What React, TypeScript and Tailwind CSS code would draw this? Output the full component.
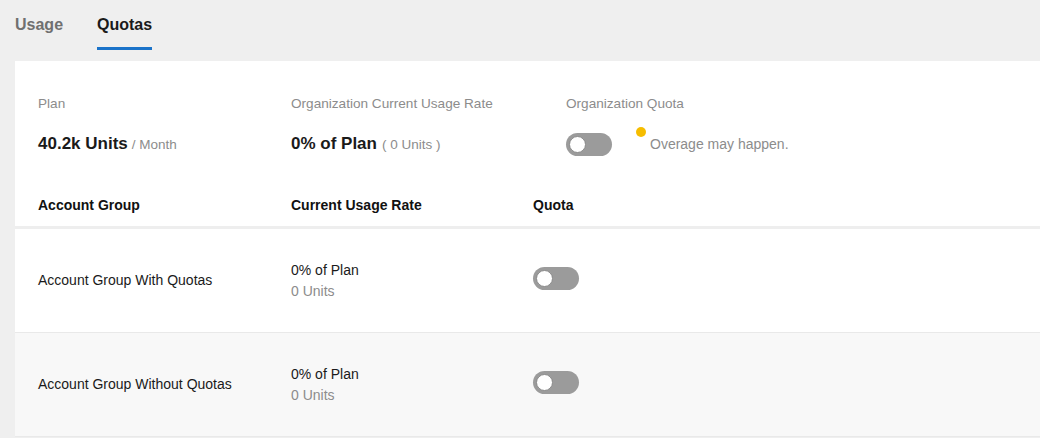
import React from 'react'

const font = { fontFamily: '"Liberation Sans", Arial, sans-serif' }

function Toggle() {
  return (
    <div className="relative h-[23px] w-[46px] shrink-0 rounded-full bg-[#9b9b9b]">
      <span className="absolute left-[3px] top-[3px] h-[17px] w-[17px] rounded-full border border-[#8a8a8a] bg-white" />
    </div>
  )
}

export default function App() {
  const rows = [
    { name: 'Account Group With Quotas', bg: 'bg-white' },
    { name: 'Account Group Without Quotas', bg: 'bg-[#f8f8f8]' },
  ]

  return (
    <div className="h-[438px] w-[1040px] overflow-hidden bg-[#efefef]" style={font}>
      <div className="flex h-[61px] gap-[34px] px-[15px]">
        <button className="h-[50px] border-b-[3px] border-transparent pt-[14px] pb-[11px] text-[16px] font-bold leading-[22px] text-[#707070]">
          Usage
        </button>
        <button className="h-[50px] border-b-[3px] border-[#1b73c9] pt-[14px] pb-[11px] text-[16px] font-bold leading-[22px] text-[#1a1a1a]">
          Quotas
        </button>
      </div>

      <div className="ml-[15px] bg-white">
        <div className="grid grid-cols-[253px_275px_1fr] px-[23px] pt-[35px]">
          <div>
            <div className="text-[13.6px] leading-[16px] text-[#8c8c8c]">Plan</div>
            <div className="mt-[20px] flex h-[24px] items-center">
              <span className="text-[17px] font-bold text-[#1a1a1a]">40.2k Units</span>
              <span className="ml-[4px] mt-[2px] text-[13.5px] text-[#8c8c8c]">/ Month</span>
            </div>
          </div>
          <div>
            <div className="text-[13.6px] leading-[16px] text-[#8c8c8c]">Organization Current Usage Rate</div>
            <div className="mt-[20px] flex h-[24px] items-center">
              <span className="text-[17px] font-bold text-[#1a1a1a]">0% of Plan</span>
              <span className="ml-[5px] mt-[2px] text-[13.5px] text-[#8c8c8c]">( 0 Units )</span>
            </div>
          </div>
          <div>
            <div className="text-[13.6px] leading-[16px] text-[#8c8c8c]">Organization Quota</div>
            <div className="mt-[20px] flex h-[24px] items-center">
              <Toggle />
              <span className="ml-[24px] -mt-[25px] h-[10px] w-[10px] shrink-0 rounded-full bg-[#f6bd00]" />
              <span className="ml-[4px] text-[14px] text-[#8c8c8c]">Overage may happen.</span>
            </div>
          </div>
        </div>

        <div className="grid grid-cols-[253px_242px_1fr] border-b-[3px] border-[#eeeeee] px-[23px] pt-[39px] pb-[11px] text-[14px] font-bold leading-[20px] text-[#111]">
          <div>Account Group</div>
          <div>Current Usage Rate</div>
          <div>Quota</div>
        </div>

        {rows.map((row) => (
          <div
            key={row.name}
            className={`grid h-[104px] grid-cols-[253px_242px_1fr] items-center border-b border-[#e9e9e9] px-[23px] text-[14px] ${row.bg}`}
          >
            <div className="text-[#1a1a1a]">{row.name}</div>
            <div className="flex flex-col gap-[1px] leading-[20px]">
              <span className="text-[#1a1a1a]">0% of Plan</span>
              <span className="text-[#8c8c8c]">0 Units</span>
            </div>
            <div className="mb-[4px]">
              <Toggle />
            </div>
          </div>
        ))}
      </div>
    </div>
  )
}
